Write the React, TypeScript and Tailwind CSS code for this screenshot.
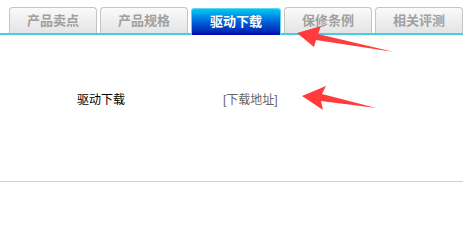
// Product detail tabs — driver download panel

const TABS = ['产品卖点', '产品规格', '驱动下载', '保修条例', '相关评测'];
const ACTIVE = 2;

function Arrows() {
  return (
    <svg className="absolute left-0 top-0 pointer-events-none" width="463" height="226" viewBox="0 0 463 226">
      <polygon points="297,33 321,26 318,34 394,52 316,40 314,47" fill="#ff3b3b" />
      <polygon points="302,96 326,86 322,94 376,108 321,101 323,110" fill="#ff3b3b" />
    </svg>
  );
}

export default function App() {
  return (
    <div
      className="relative w-[463px] h-[226px] bg-white overflow-hidden"
      style={{ fontFamily: '"Liberation Sans", "Noto Sans CJK SC", sans-serif' }}
    >
      {/* Tab bar */}
      <div className="flex items-end gap-[3px] pl-[9px] pt-[6px] border-b-2 border-[#4ccbe8] h-[35px]">
        {TABS.map((t, i) =>
          i === ACTIVE ? (
            <div
              key={t}
              className="w-[90px] h-[27px] -mb-[2px] rounded-t-[3px] border border-b-0 border-[#5fd6f2] bg-gradient-to-b from-[#00c8f4] via-[#0060d8] to-[#0000a8] flex items-center justify-center text-white font-bold text-[13px]"
            >
              {t}
            </div>
          ) : (
            <div
              key={t}
              className="w-[88px] h-[26px] rounded-t-[4px] border border-b-0 border-[#c4c4c4] bg-gradient-to-b from-[#fafafa] to-[#e4e4e4] flex items-center justify-center text-[#a0a0a0] font-bold text-[13px]"
            >
              {t}
            </div>
          )
        )}
      </div>

      {/* Content */}
      <div className="h-[146px]">
        <div className="flex pt-[58px] text-[12px] leading-[14px]">
          <div className="w-[223px] pl-[77px] text-black">驱动下载</div>
          <div className="text-[#666]">[下载地址]</div>
        </div>
      </div>
      <div className="h-px bg-[#a9dde9]" />

      <Arrows />
    </div>
  );
}
